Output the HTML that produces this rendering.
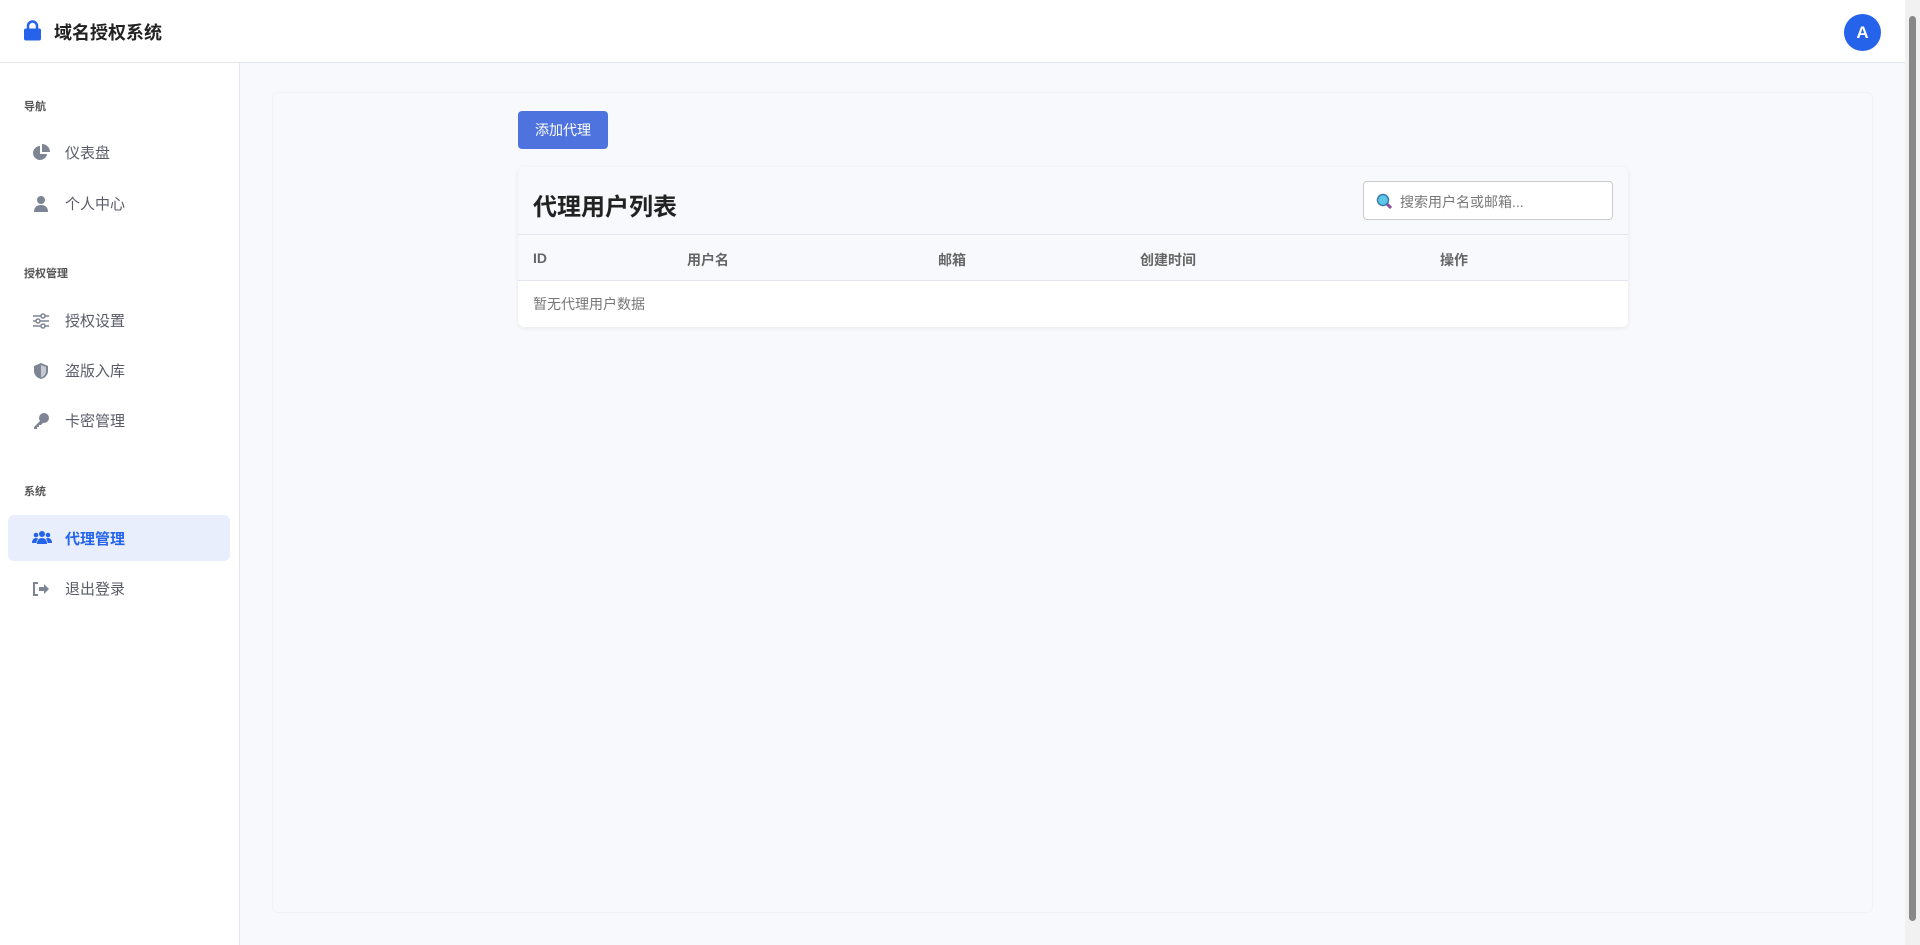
<!DOCTYPE html>
<html><head><meta charset="utf-8"><style>
*{box-sizing:border-box;margin:0;padding:0}
body{width:1920px;height:945px;overflow:hidden;background:#f8f9fc;font-family:"Liberation Sans","Noto Sans CJK SC",sans-serif;position:relative}
.hdr{position:absolute;left:0;top:0;width:1905px;height:63px;background:#fff;border-bottom:1px solid #e3e6f0}
.logo{position:absolute;left:24px;top:20px}
.title{position:absolute;left:54px;top:19px;font-size:18px;font-weight:bold;color:#222}
.av{position:absolute;left:1844px;top:14px;width:37px;height:37px;border-radius:50%;background:#2563eb;color:#fff;font-weight:bold;font-size:17px;text-align:center;line-height:37px}
.side{position:absolute;left:0;top:63px;width:240px;height:882px;background:#fff;border-right:1px solid #e3e6f0}
.lab{position:absolute;left:24px;font-size:11px;font-weight:bold;color:#555}
.it{position:absolute;left:8px;width:222px;height:46px;border-radius:6px;font-size:15px;color:#5a5c69}
.it span{position:absolute;left:57px;top:13px}
.it svg{position:absolute;left:24px;top:15px}
.act{background:#e8eefc;color:#2563eb;font-weight:bold}
.panel{position:absolute;left:272px;top:92px;width:1601px;height:821px;background:#f8f9fc;border:1px solid #f2f3f7;border-radius:6px}
.btn{position:absolute;left:518px;top:111px;width:90px;height:38px;background:#4e73df;border-radius:4px;color:#fff;font-size:14px;text-align:center;line-height:38px}
.card{position:absolute;left:518px;top:167px;width:1110px;height:160px;background:#fff;border-radius:6px;box-shadow:0 1px 4px rgba(0,0,0,.08);overflow:hidden}
.ch{height:68px;background:#f8f9fc;border-bottom:1px solid #e3e6f0;position:relative}
.ch h2{position:absolute;left:15px;top:20px;font-size:24px;color:#222}
.srch{position:absolute;left:845px;top:14px;width:250px;height:39px;border:1px solid #ccc;border-radius:4px;background:#fff;font-size:14px;color:#777;padding:10px 0 0 36px}
.th{height:46px;background:#f8f9fc;border-bottom:1px solid #e3e6f0;position:relative;font-size:14px;font-weight:bold;color:#666}
.th span{position:absolute;top:15px}
.tb{position:relative;height:46px;font-size:14px;color:#777}
.sb{position:absolute;left:1905px;top:0;width:15px;height:945px;background:#f1f1f1}
.sb div{position:absolute;left:4px;top:16px;width:7px;height:905px;background:#888;border-radius:4px}
</style></head><body>
<div class="hdr">
<svg class="logo" width="17" height="21" viewBox="0 0 17 21"><path d="M4 9V6a4.5 4.5 0 0 1 9 0v3" fill="none" stroke="#2563eb" stroke-width="2.5"/><rect x="0" y="8.5" width="17" height="12" rx="2" fill="#2563eb"/></svg>
<div class="title">域名授权系统</div>
<div class="av">A</div>
</div>
<div class="side">
<div class="lab" style="top:35px">导航</div>
<div class="it" style="top:66px"><svg width="18" height="18" viewBox="0 0 18 18"><path d="M8 2a7 7 0 1 0 7 8H8z" fill="#7d8595"/><path d="M10 0v8h8A8 8 0 0 0 10 0z" fill="#7d8595"/></svg><span>仪表盘</span></div>
<div class="it" style="top:117px"><svg width="18" height="18" viewBox="0 0 18 18"><circle cx="9" cy="5" r="4" fill="#7d8595"/><path d="M2 17c0-5 3-7 7-7s7 2 7 7z" fill="#7d8595"/></svg><span>个人中心</span></div>
<div class="lab" style="top:202px">授权管理</div>
<div class="it" style="top:234px"><svg width="18" height="18" viewBox="0 0 18 18" fill="none" stroke="#7d8595" stroke-width="1.5"><path d="M1 4h16M1 9h16M1 14h16"/><circle cx="11" cy="4" r="2" fill="#fff"/><circle cx="6" cy="9" r="2" fill="#fff"/><circle cx="11" cy="14" r="2" fill="#fff"/></svg><span>授权设置</span></div>
<div class="it" style="top:284px"><svg width="18" height="18" viewBox="0 0 18 18"><path d="M9 1l7 3v5c0 4-3 7-7 8-4-1-7-4-7-8V4z" fill="#7d8595"/><path d="M9 3l5 2v4c0 3-2 5.5-5 6.5z" fill="#c5cad3"/></svg><span>盗版入库</span></div>
<div class="it" style="top:334px"><svg width="18" height="18" viewBox="0 0 18 18"><circle cx="12" cy="6" r="5" fill="#7d8595"/><path d="M9 8L2 15v2h3v-2h2v-2h2l2-2z" fill="#7d8595"/></svg><span>卡密管理</span></div>
<div class="lab" style="top:420px">系统</div>
<div class="it act" style="top:452px"><svg width="20" height="16" viewBox="0 0 20 16"><circle cx="10" cy="4" r="3" fill="#2563eb"/><circle cx="4" cy="5" r="2.3" fill="#2563eb"/><circle cx="16" cy="5" r="2.3" fill="#2563eb"/><path d="M5 14c0-4 2-6 5-6s5 2 5 6z M0 13c0-3 1.5-5 4-5 1 0 1.5.3 2 .7-1 1-1.5 2.5-1.5 4.3zM20 13c0-3-1.5-5-4-5-1 0-1.5.3-2 .7 1 1 1.5 2.5 1.5 4.3z" fill="#2563eb"/></svg><span>代理管理</span></div>
<div class="it" style="top:502px"><svg width="18" height="18" viewBox="0 0 18 18"><path d="M6 3H2v12h4" fill="none" stroke="#7d8595" stroke-width="2"/><path d="M7 7h5V4l5 5-5 5v-3H7z" fill="#7d8595"/></svg><span>退出登录</span></div>
</div>
<div class="panel"></div>
<div class="btn">添加代理</div>
<div class="card">
<div class="ch"><h2>代理用户列表</h2><div class="srch"><svg style="position:absolute;left:12px;top:11px" width="17" height="17" viewBox="0 0 17 17"><path d="M10 10l5 5" stroke="#8a4a9a" stroke-width="3"/><circle cx="7" cy="7" r="5.5" fill="#5ec6e8" stroke="#3a7ca8" stroke-width="1.5"/></svg>搜索用户名或邮箱...</div></div>
<div class="th"><span style="left:15px">ID</span><span style="left:169px">用户名</span><span style="left:420px">邮箱</span><span style="left:622px">创建时间</span><span style="left:922px">操作</span></div>
<div class="tb"><span style="position:absolute;left:15px;top:13px">暂无代理用户数据</span></div>
</div>
<div class="sb"><div></div></div>
</body></html>
